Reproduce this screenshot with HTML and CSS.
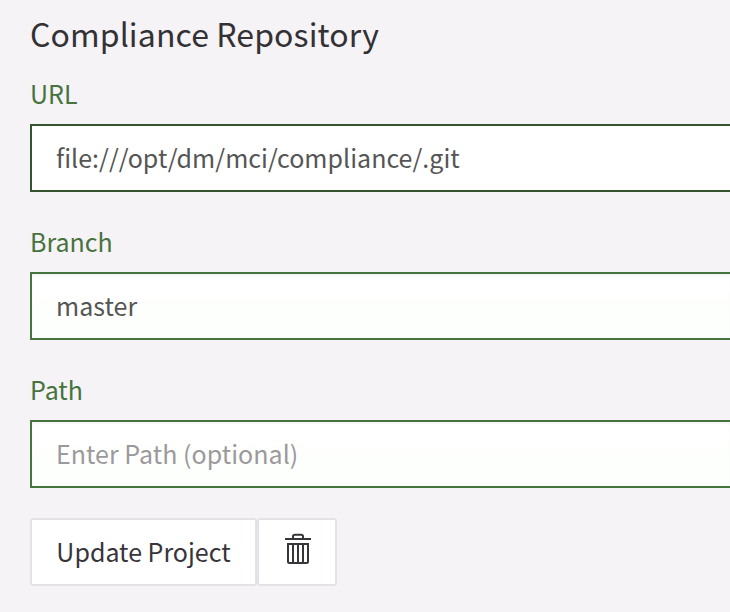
FILE: index.html
```html
<!DOCTYPE html>
<html lang="en">
<head>
<meta charset="utf-8">
<title>Compliance Repository</title>
<link rel="stylesheet" href="styles.css">
</head>
<body>
<form class="repo-form">
  <h2 class="title">Compliance Repository</h2>
  <div class="field">
    <label class="label" for="url">URL</label>
    <input class="input input-active" id="url" type="text" value="file:///opt/dm/mci/compliance/.git">
  </div>
  <div class="field">
    <label class="label" for="branch">Branch</label>
    <input class="input" id="branch" type="text" value="master">
  </div>
  <div class="field">
    <label class="label" for="path">Path</label>
    <input class="input" id="path" type="text" placeholder="Enter Path (optional)">
  </div>
  <div class="actions">
    <button class="button update" type="button"><span>Update Project</span></button>
    <button class="button delete" type="button" aria-label="Delete">
      <svg class="trash" width="26" height="31" viewBox="0 0 26 31" fill="none" stroke="#37343a" stroke-width="2">
        <path d="M0 6H26M8 6V3.500Q8 1.700 10 1.700H16Q18 1.700 18 3.500V6"/>
        <path d="M3 11H23V28.500Q23 30 21.500 30H4.500Q3 30 3 28.500ZM8 11V30M13 11V30M18 11V30"/>
      </svg>
    </button>
  </div>
</form>
</body>
</html>
```
FILE: styles.css
```css
* { box-sizing: border-box; }
body {
  margin: 0;
  height: 612px;
  overflow: hidden;
  background: #f5f3f6;
  font-family: "Noto Sans CJK SC", "Noto Sans", sans-serif;
}
.repo-form {
  padding: 13px 0 0 30px;
}
.title {
  margin: 0 0 24px;
  font-size: 32px;
  line-height: 40px;
  font-weight: 400;
  letter-spacing: .1px;
  color: #333134;
}
.field {
  display: flex;
  flex-direction: column;
  gap: 15px;
  margin-bottom: 33px;
}
.label {
  font-size: 25px;
  line-height: 32px;
  color: #47733f;
}
.input {
  height: 68px;
  padding: 0 24px 2px;
  border: 2px solid #47733f;
  border-right: 0;
  border-radius: 0;
  outline: 0;
  background: linear-gradient(#ffffff, #fcfffb);
  box-shadow: inset 0 2px 2px rgba(0, 0, 0, .04);
  font: 25px "Noto Sans CJK SC", "Noto Sans", sans-serif;
  letter-spacing: .03px;
  color: #555;
}
.input-active {
  border-color: #35532f;
  background: #fff;
  box-shadow: none;
}
.input::placeholder { color: #9b999c; opacity: 1; }
.actions {
  display: flex;
  margin-top: -3px;
}
.button {
  display: flex;
  align-items: center;
  justify-content: center;
  height: 68px;
  padding: 0 0 2px;
  border: 2px solid #e4e2e6;
  border-radius: 3px;
  background: #fff;
  color: #37343a;
  font: 25px "Noto Sans CJK SC", "Noto Sans", sans-serif;
}
.update { width: 227px; }
.delete { width: 80px; padding-left: 2px; }
.trash { margin-bottom: 5px; }
```
